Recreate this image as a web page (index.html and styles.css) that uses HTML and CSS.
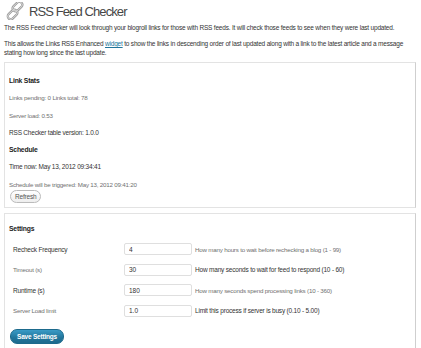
FILE: index.html
```html
<!DOCTYPE html>
<html lang="en">
<head>
    <meta charset="UTF-8">
    <title>RSS Feed Checker</title>
    <link rel="stylesheet" href="styles.css">
</head>
<body>
    <div class="wrap">
        <h2 class="title">
            <svg class="icon" width="20" height="18" viewBox="0 0 20 18">
                <g fill="none" stroke="#9a9a9a" stroke-width="2.2">
                    <rect x="8.5" y="-1" width="6" height="11" rx="3" transform="rotate(45 11.5 4.5)"/>
                    <rect x="3.5" y="7" width="6" height="11" rx="3" transform="rotate(45 6.5 12.5)"/>
                </g>
                <g fill="none" stroke="#e4e4e4" stroke-width="0.8">
                    <rect x="8.5" y="-1" width="6" height="11" rx="3" transform="rotate(45 11.5 4.5)"/>
                    <rect x="3.5" y="7" width="6" height="11" rx="3" transform="rotate(45 6.5 12.5)"/>
                </g>
            </svg>
            RSS Feed Checker
        </h2>
        <p class="intro">The RSS Feed checker will look through your blogroll links for those with RSS feeds. It will check those feeds to see when they were last updated.</p>
        <p class="intro">This allows the Links RSS Enhanced <a href="#">widget</a> to show the links in descending order of last updated along with a link to the latest article and a message stating how long since the last update.</p>

        <div class="box stats">
            <h3>Link Stats</h3>
            <p class="faint">Links pending: 0 Links total: 78</p>
            <p class="faint">Server load: 0.53</p>
            <p>RSS Checker table version: 1.0.0</p>
            <h3>Schedule</h3>
            <p>Time now: May 13, 2012 09:34:41</p>
            <p class="faint">Schedule will be triggered: May 13, 2012 09:41:20</p>
            <div class="refresh"><button class="button">Refresh</button></div>
        </div>

        <div class="box settings">
            <h3>Settings</h3>
            <div class="row">
                <label>Recheck Frequency</label>
                <input type="text" value="4">
                <span class="desc faint">How many hours to wait before rechecking a blog (1 - 99)</span>
            </div>
            <div class="row">
                <label class="faint">Timeout (s)</label>
                <input type="text" value="30">
                <span class="desc">How many seconds to wait for feed to respond (10 - 60)</span>
            </div>
            <div class="row">
                <label>Runtime (s)</label>
                <input type="text" value="180">
                <span class="desc faint">How many seconds spend processing links (10 - 360)</span>
            </div>
            <div class="row">
                <label class="faint">Server Load limit</label>
                <input type="text" value="1.0">
                <span class="desc">Limit this process if server is busy (0.10 - 5.00)</span>
            </div>
            <div class="save"><button class="button-primary">Save Settings</button></div>
        </div>
    </div>
</body>
</html>
```

FILE: styles.css
```css
body {
    margin: 0;
    background: #ffffff;
    color: #333333;
    font-family: "Liberation Sans", Arial, sans-serif;
    font-size: 6.5px;
    letter-spacing: -0.2px;
    line-height: 9px;
}

.wrap {
    padding: 0 5px 0 4px;
}

.title {
    display: flex;
    align-items: center;
    gap: 3px;
    margin: 0;
    padding: 3px 0 0 2px;
    height: 16px;
    font-size: 13px;
    letter-spacing: -0.9px;
    font-weight: normal;
    color: #464646;
}

.icon {
    display: block;
}

.intro {
    margin: 0;
    padding-top: 4px;
    padding-bottom: 3px;
}

.intro a {
    color: #21759b;
}

.box {
    border: 1px solid #e3e3e3;
    border-right-color: #cfcfcf;
    display: flex;
    flex-direction: column;
}

.stats {
    margin-top: 2px;
    padding: 13px 4px 4px 4px;
    gap: 8.3px;
}

.box h3 {
    margin: 0;
    font-size: 6.8px;
    font-weight: bold;
    color: #222222;
}

.box p {
    margin: 0;
}

.faint {
    color: #707070;
    font-size: 6.2px;
}

.refresh {
    margin-top: -7px;
}

.button {
    font-family: inherit;
    font-size: 6.5px;
    letter-spacing: -0.2px;
    line-height: 9px;
    color: #555555;
    background: linear-gradient(#ffffff, #eeeeee);
    border: 1px solid #bbbbbb;
    border-radius: 7px;
    padding: 1px 4px;
    margin-left: 1px;
}

.settings {
    margin-top: 5px;
    padding: 10px 4px 6px 4px;
}

.settings h3 {
    margin-bottom: 6px;
}

.row {
    display: flex;
    align-items: center;
    height: 20.5px;
}

.row label {
    box-sizing: border-box;
    width: 115px;
    padding-left: 4px;
}

.row input {
    box-sizing: border-box;
    width: 68px;
    height: 12px;
    padding: 0 4px;
    margin: 0;
    border: 1px solid #dfdfdf;
    border-radius: 2px;
    font-family: inherit;
    font-size: 6.5px;
    color: #333333;
}

.desc {
    padding-left: 3px;
}

.save {
    margin-top: 8px;
}

.button-primary {
    margin-left: 1px;
    font-family: inherit;
    font-size: 6.5px;
    letter-spacing: -0.2px;
    font-weight: bold;
    line-height: 9px;
    color: #ffffff;
    background: linear-gradient(#3a9bc6, #21759b 60%, #1e6a8d);
    border: 1px solid #1d6a8c;
    border-radius: 7px;
    padding: 2px 6px;
}
```
